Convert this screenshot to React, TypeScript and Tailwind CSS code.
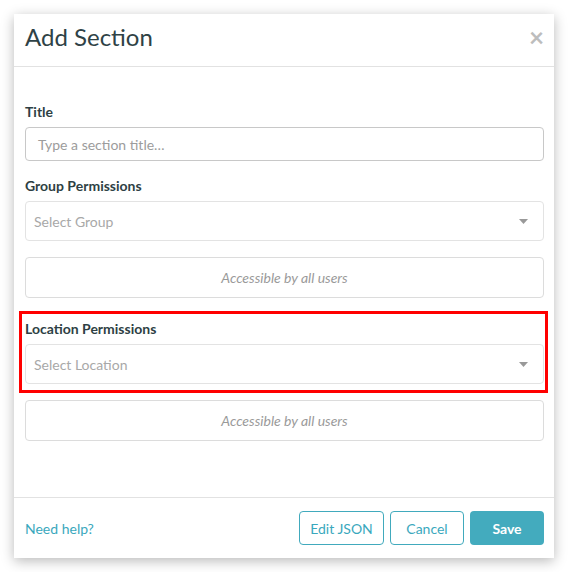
function Caret() {
  return (
    <svg width="9" height="5" viewBox="0 0 9 5" className="shrink-0">
      <path d="M0 0h9L4.5 5z" fill="#999" />
    </svg>
  )
}

function SelectBox({ placeholder }: { placeholder: string }) {
  return (
    <div className="flex h-[40px] items-center justify-between rounded-[4px] border border-[#e3e3e3] pl-[8px] pr-[15px]">
      <span className="text-[14px] text-[#a8a8a8]">{placeholder}</span>
      <Caret />
    </div>
  )
}

function AccessBox() {
  return (
    <div className="flex h-[41px] items-center justify-center rounded-[4px] border border-[#dcdcdc] text-[14px] italic text-[#9a9a9a]">
      Accessible by all users
    </div>
  )
}

function Label({ children }: { children: string }) {
  return <div className="mb-[5px] h-[20px] text-[14px] font-bold leading-[20px] text-[#2e3f44]">{children}</div>
}

export default function App() {
  return (
    <div
      className="relative h-[572px] w-[568px] bg-white p-[14px]"
      style={{ fontFamily: 'Lato, "Open Sans", sans-serif' }}
    >
      <div className="flex h-[544px] w-[540px] flex-col bg-white shadow-[0_3px_12px_rgba(0,0,0,0.28)]">
        {/* header */}
        <div className="flex h-[53px] items-center justify-between border-b border-[#e2e2e2] pb-[6px] pl-[11px] pr-[10px]">
          <h1 className="text-[24px] font-normal leading-none text-[#2f4246]">Add Section</h1>
          <span className="text-[26px] font-bold leading-none text-[#bdbdbd]">&times;</span>
        </div>

        {/* body */}
        <div className="flex-1 pl-[11px] pr-[10px] pt-[35px]">
          <Label>Title</Label>
          <div className="flex h-[34px] items-center rounded-[4px] border border-[#c8c8c8] px-[12px] text-[14px] text-[#9c9c9c]">
            Type a section title…
          </div>

          <div className="mt-[15px]">
            <Label>Group Permissions</Label>
            <SelectBox placeholder="Select Group" />
          </div>
          <div className="mt-[16px]">
            <AccessBox />
          </div>

          <div className="mt-[21px]">
            <Label>Location Permissions</Label>
            <SelectBox placeholder="Select Location" />
          </div>
          <div className="mt-[16px]">
            <AccessBox />
          </div>
        </div>

        {/* footer */}
        <div className="flex h-[61px] items-center justify-between border-t border-[#e2e2e2] pl-[11px] pr-[10px]">
          <a className="text-[14px] text-[#3aa8bd]">Need help?</a>
          <div className="flex gap-[6px]">
            <button className="h-[34px] w-[85px] rounded-[4px] border border-[#41aabd] text-[14px] text-[#3aa8bd]">
              Edit JSON
            </button>
            <button className="h-[34px] w-[74px] rounded-[4px] border border-[#41aabd] text-[14px] text-[#3aa8bd]">
              Cancel
            </button>
            <button className="h-[34px] w-[74px] rounded-[4px] bg-[#43abbe] text-[14px] font-bold text-white">
              Save
            </button>
          </div>
        </div>
      </div>

      {/* highlight */}
      <div className="pointer-events-none absolute left-[19px] top-[311px] h-[82px] w-[529px] border-[3px] border-[#ff0000]" />
    </div>
  )
}
